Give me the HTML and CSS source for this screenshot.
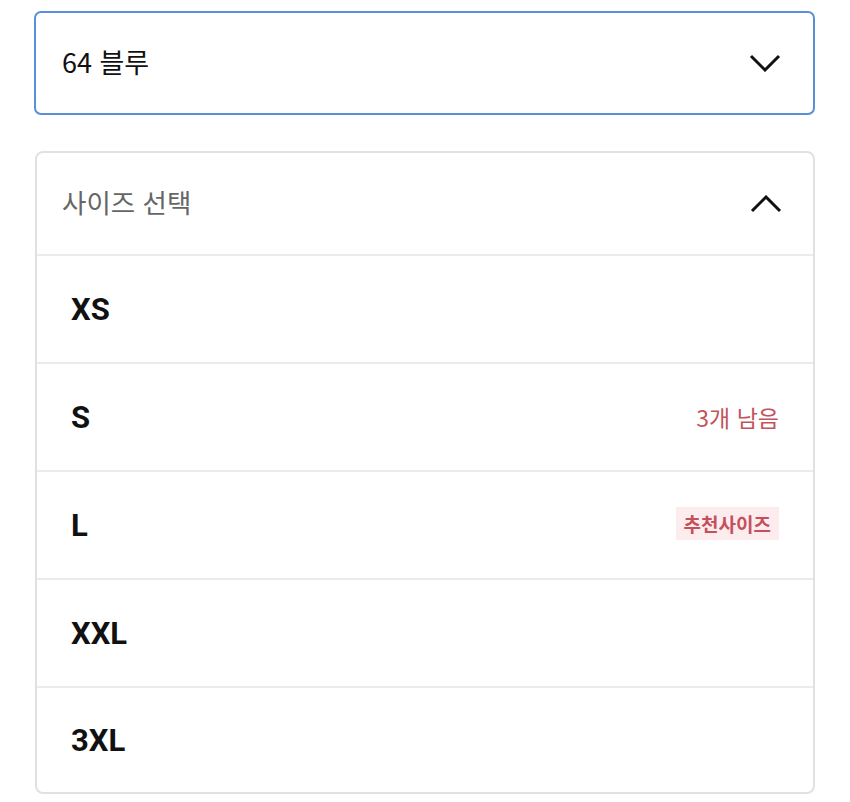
FILE: index.html
```html
<!DOCTYPE html>
<html lang="ko">
<head>
  <meta charset="UTF-8">
  <title>옵션 선택</title>
  <meta name="viewport" content="width=device-width, initial-scale=1">
  <link rel="stylesheet" href="styles.css">
</head>
<body>
  <div class="options">
    <div class="select">
      <span class="select-value">64 블루</span>
      <svg class="chevron" width="32" height="18" viewBox="0 0 32 18">
        <polyline points="2,2 16,16 30,2" fill="none" stroke="#111" stroke-width="3" stroke-linejoin="miter"/>
      </svg>
    </div>

    <div class="size-box">
      <div class="size-head">
        <span class="size-title">사이즈 선택</span>
        <svg class="chevron" width="32" height="18" viewBox="0 0 32 18">
          <polyline points="2,16 16,2 30,16" fill="none" stroke="#111" stroke-width="3" stroke-linejoin="miter"/>
        </svg>
      </div>
      <ul class="size-list">
        <li><span class="size-name">XS</span></li>
        <li><span class="size-name">S</span><span class="stock">3개 남음</span></li>
        <li><span class="size-name">L</span><span class="badge">추천사이즈</span></li>
        <li><span class="size-name">XXL</span></li>
        <li><span class="size-name">3XL</span></li>
      </ul>
    </div>
  </div>
</body>
</html>
```

FILE: styles.css
```css
body {
  margin: 0;
  font-family: 'Noto Sans CJK KR', 'Noto Sans', sans-serif;
  background: #fff;
  color: #111;
}
.options {
  padding: 11px 35px 0 34px;
}
.select {
  display: flex;
  align-items: center;
  justify-content: space-between;
  height: 100px;
  padding: 0 32px 0 26px;
  border: 2px solid #5b8ed8;
  border-radius: 7px;
}
.select-value {
  font-size: 27px;
  line-height: 1;
  margin-top: -4px;
  color: #111;
}
.chevron {
  display: block;
}
.size-box {
  margin-top: 36px;
  margin-left: 1px;
  border: 2px solid #e1e1e1;
  border-radius: 8px;
}
.size-head {
  display: flex;
  align-items: center;
  justify-content: space-between;
  height: 101px;
  padding: 0 31px 0 25px;
}
.size-title {
  font-size: 26.5px;
  line-height: 1;
  margin-top: -3px;
  color: #666;
}
.size-list {
  list-style: none;
  margin: 0;
  padding: 0;
}
.size-list li {
  display: flex;
  align-items: center;
  justify-content: space-between;
  height: 106px;
  padding: 0 34px 0 34px;
  border-top: 2px solid #ebebeb;
}
.size-list li:last-child {
  height: 104px;
}
.size-name {
  font-family: Roboto, 'Liberation Sans', sans-serif;
  font-weight: 700;
  font-size: 31px;
  color: #111;
}
.stock {
  font-size: 23px;
  color: #c4535d;
}
.badge {
  font-size: 19px;
  font-weight: 700;
  color: #c4505c;
  background: #fdecee;
  padding: 4px 8px;
  line-height: 25px;
  margin-top: -4px;
}
```
